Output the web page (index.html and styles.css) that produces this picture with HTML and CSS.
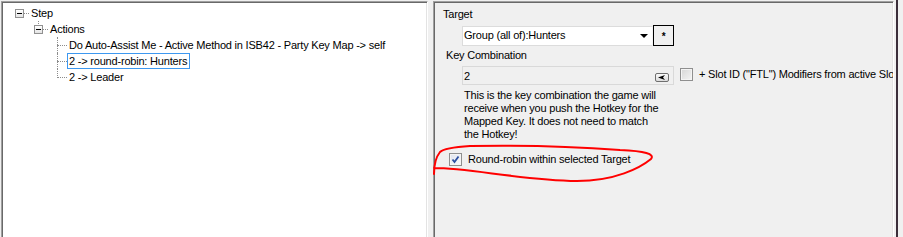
FILE: index.html
```html
<!DOCTYPE html>
<html lang="en">
<head>
<meta charset="utf-8">
<title>Key Map Action</title>
<link rel="stylesheet" href="styles.css">
</head>
<body>
<div class="window">
  <div class="tree-pane">
    <ul class="tree">
      <li class="node">
        <div class="row">
          <span class="gutter root"><span class="expander"></span></span>
          <span class="label">Step</span>
        </div>
        <ul class="children">
          <li class="node">
            <div class="row">
              <span class="gutter last"><span class="expander"></span></span>
              <span class="label">Actions</span>
            </div>
            <ul class="children">
              <li class="row"><span class="gutter mid"></span><span class="label">Do Auto-Assist Me - Active Method in ISB42 - Party Key Map -&gt; self</span></li>
              <li class="row"><span class="gutter mid"></span><span class="label selected">2 -&gt; round-robin: Hunters</span></li>
              <li class="row"><span class="gutter last"></span><span class="label">2 -&gt; Leader</span></li>
            </ul>
          </li>
        </ul>
      </li>
    </ul>
  </div>

  <div class="props">
    <div class="field-label target-label">Target</div>
    <div class="combo-row">
      <div class="combo">
        <span class="combo-text">Group (all of):Hunters</span>
        <span class="combo-arrow"></span>
      </div>
      <div class="star-btn">*</div>
    </div>
    <div class="field-label key-label">Key Combination</div>
    <div class="key-row">
      <div class="textbox">
        <span class="textbox-text">2</span>
        <span class="mini-btn"><svg width="8" height="5" viewBox="0 0 8 5"><polygon points="0,2.5 7,0 5,2.5 7,5" fill="#000"/></svg></span>
      </div>
      <span class="checkbox"></span>
      <span class="check-label">+ Slot ID ("FTL") Modifiers from active Slot</span>
    </div>
    <p class="description">This is the key combination the game will<br>receive when you push the Hotkey for the<br>Mapped Key. It does not need to match<br>the Hotkey!</p>
    <div class="rr-row">
      <span class="checkbox checked"><svg width="11" height="11" viewBox="0 0 11 11"><path d="M2.5 5.5 L4.5 8 L8.5 2.5" fill="none" stroke="#2b4fa0" stroke-width="1.8"/></svg></span>
      <span class="rr-label">Round-robin within selected Target</span>
    </div>
  </div>

  <div class="edge"></div>

  <svg class="annotation" width="903" height="237" viewBox="0 0 903 237">
    <path d="M434 168 C470 168 520 180 577 181 C615 181 640 168 651 159 C655 154 645 151 620 150 C580 147 520 145 470 146 C455 147 443 149 440 152 C436 157 434 166 434 174" fill="none" stroke="#f00" stroke-width="2" stroke-linecap="round"/>
  </svg>
</div>
</body>
</html>
```

FILE: styles.css
```css
html, body {
  margin: 0;
  padding: 0;
}

body {
  background: #f0f0f0;
  overflow: hidden;
  font-family: "Liberation Sans", Arial, sans-serif;
  font-size: 11px;
  letter-spacing: -0.2px;
  color: #000;
}

.window {
  position: relative;
  display: flex;
  align-items: flex-start;
  width: 903px;
  height: 237px;
  padding: 1px 0 0 1px;
  box-sizing: border-box;
  overflow: hidden;
}

/* ---------- tree pane ---------- */
.tree-pane {
  width: 427px;
  height: 270px;
  flex-shrink: 0;
  box-sizing: border-box;
  background: #fff;
  border: 1px solid;
  border-color: #a0a0a0 #fff #fff #a0a0a0;
  box-shadow: inset 1px 1px 0 #696969, inset -1px -1px 0 #e3e3e3;
  padding: 1px;
}

.tree,
.children {
  list-style: none;
  margin: 0;
  padding: 0;
}

.tree {
  padding: 2px 0 0 7px;
}

.children {
  padding-left: 19px;
}

.row {
  display: flex;
  align-items: center;
  height: 16px;
}

.gutter {
  position: relative;
  width: 19px;
  height: 16px;
  flex-shrink: 0;
}

.gutter::after {
  content: "";
  position: absolute;
  left: 9px;
  right: 0;
  top: 8px;
  border-top: 1px dotted #8c8c8c;
}

.gutter.mid::before,
.gutter.last::before {
  content: "";
  position: absolute;
  left: 9px;
  top: 0;
  border-left: 1px dotted #8c8c8c;
}

.gutter.mid::before {
  bottom: 0;
}

.gutter.last::before {
  height: 9px;
}

.expander {
  position: absolute;
  z-index: 1;
  left: 5px;
  top: 4px;
  width: 9px;
  height: 9px;
  box-sizing: border-box;
  border: 1px solid #919191;
  background: linear-gradient(#ffffff, #e4e4e4);
}

.expander::after {
  content: "";
  position: absolute;
  left: 1px;
  top: 3px;
  width: 5px;
  height: 1px;
  background: #000;
}

.label {
  border: 1px solid transparent;
  padding: 0 2px 0 1px;
  line-height: 14px;
  white-space: nowrap;
}

.label.selected {
  border-color: #3d98f0;
}

/* ---------- property panel ---------- */
.props {
  position: relative;
  margin-left: 5px;
  width: 461px;
  height: 270px;
  flex-shrink: 0;
  box-sizing: border-box;
  background: #f0f0f0;
  border: 1px solid;
  border-color: #a0a0a0 #fff #fff #a0a0a0;
  box-shadow: inset 1px 1px 0 #696969, inset -1px -1px 0 #e3e3e3;
  padding: 6px 0 0 1px;
  overflow: hidden;
}

.field-label {
  line-height: 13px;
  white-space: nowrap;
}

.target-label {
  padding-left: 8px;
}

.key-label {
  margin-top: 3px;
  padding-left: 11px;
}

.combo-row {
  display: flex;
  align-items: flex-start;
  margin-top: 4px;
  padding-left: 27px;
}

.combo {
  display: flex;
  align-items: flex-start;
  justify-content: space-between;
  width: 191px;
  height: 20px;
  margin-top: 1px;
  box-sizing: border-box;
  border: 1px solid #dcdcdc;
  border-right-color: #f4f4f4;
  background: #fff;
  padding: 0 4px 0 1px;
  line-height: 16px;
  white-space: nowrap;
}

.combo-arrow {
  width: 0;
  height: 0;
  margin-top: 7px;
  border-left: 4px solid transparent;
  border-right: 4px solid transparent;
  border-top: 4px solid #000;
}

.star-btn {
  width: 21px;
  height: 21px;
  box-sizing: border-box;
  border: 1px solid #000;
  padding-top: 4px;
  text-align: center;
  font-weight: bold;
  font-size: 10px;
  line-height: 13px;
}

.key-row {
  display: flex;
  align-items: flex-start;
  margin-top: 4px;
  padding-left: 27px;
  white-space: nowrap;
}

.textbox {
  display: flex;
  align-items: flex-start;
  justify-content: space-between;
  width: 212px;
  height: 19px;
  flex-shrink: 0;
  box-sizing: border-box;
  border: 1px solid #d9d9d9;
  background: #f0f0f0;
  padding: 1px 4px 0 1px;
  line-height: 16px;
}

.mini-btn {
  display: flex;
  align-items: center;
  justify-content: center;
  width: 14px;
  height: 9px;
  margin-top: 5px;
  box-sizing: border-box;
  border: 1px solid #6f6f6f;
  border-radius: 2px;
  background: linear-gradient(#fafafa, #dcdcdc);
}

.checkbox {
  display: inline-flex;
  align-items: center;
  justify-content: center;
  width: 13px;
  height: 13px;
  flex-shrink: 0;
  box-sizing: border-box;
  border: 1px solid #8f8f8f;
  background: linear-gradient(135deg, #d6d6d6, #f4f4f4);
  box-shadow: inset 0 0 0 1px #f4f4f4;
}

.key-row .checkbox {
  margin: 2px 0 0 6px;
}

.check-label {
  margin: 2px 0 0 6px;
  line-height: 13px;
}

.description {
  margin: 4px 0 0 29px;
  line-height: 13px;
  white-space: nowrap;
}

.rr-row {
  display: flex;
  align-items: center;
  margin-top: 11px;
  padding-left: 14px;
}

.checkbox.checked {
  background: linear-gradient(135deg, #dfe4ee, #f8f9fc);
  border-color: #8e8f8f;
}

.rr-label {
  margin-left: 6px;
  padding-top: 1px;
  line-height: 13px;
  white-space: nowrap;
}

/* ---------- right window edge ---------- */
.edge {
  margin-left: 2px;
  width: 2px;
  height: 237px;
  flex-shrink: 0;
  margin-top: -1px;
  background: #3b2e3a;
}

/* ---------- red hand-drawn annotation ---------- */
.annotation {
  position: absolute;
  left: 0;
  top: 0;
  pointer-events: none;
}
```
